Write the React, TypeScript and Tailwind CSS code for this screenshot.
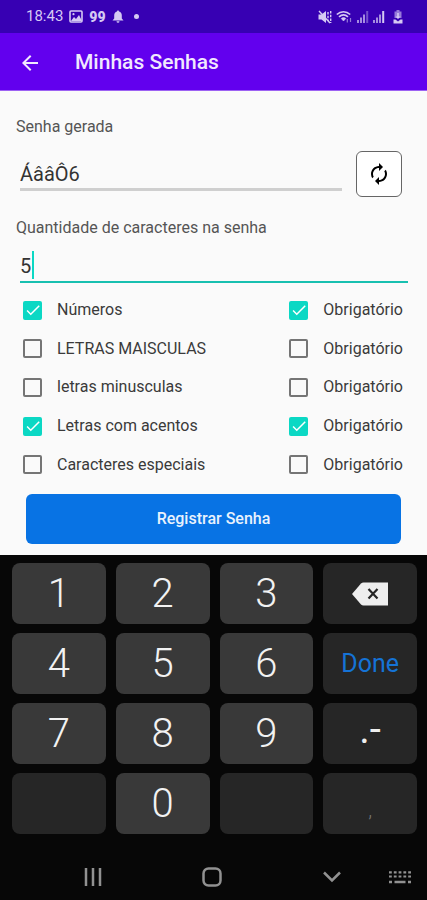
import { useState } from "react";
import { MdArrowBack, MdAutorenew, MdCheck } from "react-icons/md";

const options = [
  { id: "numeros", label: "Números", on: true },
  { id: "maiusculas", label: "LETRAS MAISCULAS", on: false },
  { id: "minusculas", label: "letras minusculas", on: false },
  { id: "acentos", label: "Letras com acentos", on: true },
  { id: "especiais", label: "Caracteres especiais", on: false },
];

function StatusBar() {
  return (
    <div className="flex h-[33px] items-center justify-between bg-[#3700b3] pr-6 pl-[26px] text-[#d5c9f3]">
      <div className="flex items-center gap-[6px]">
        <span className="text-[15px]">18:43</span>
        <svg width="14" height="13" viewBox="0 0 14 13">
          <rect x="1" y="1" width="12" height="11" rx="1" fill="none" stroke="currentColor" strokeWidth="1.6" />
          <path d="M2 11 5 7l2 2 3-4 3 6z" fill="currentColor" />
          <circle cx="4.5" cy="4.2" r="1.1" fill="currentColor" />
        </svg>
        <span className="text-sm font-black">99</span>
        <svg width="12" height="13" viewBox="0 0 12 13" fill="currentColor">
          <path d="M6 .5c.7 0 1 .5 1 1 1.900.5 2.800 2 2.800 4V8.500L11.500 10.500H.5L2.200 8.500V5.500c0-2 .9-3.500 2.800-4 0-.5.3-1 1-1z" />
          <path d="M4.500 11.300h3a1.500 1.500 0 0 1-3 0z" />
        </svg>
        <span className="ml-1 size-[5px] rounded-full bg-[#d5c9f3]" />
      </div>
      <div className="flex items-center gap-1">
        <svg width="14" height="14" viewBox="0 0 14 14" fill="currentColor">
          <path d="M.5 4.500h3L8 1v12L3.500 9.500h-3z" />
          <path d="M1 1l11 12" stroke="currentColor" strokeWidth="1.400" />
          <path d="M10 2v9M12.700 1v12" stroke="currentColor" strokeWidth="1.400" strokeDasharray="2.500 1.200" />
        </svg>
        <svg width="17" height="14" viewBox="0 0 17 14" fill="none" stroke="currentColor">
          <path d="M.8 4.500c4-3.700 9.400-3.700 13.400 0" strokeWidth="1.700" />
          <path d="M3 6.800c2.800-2.500 6.200-2.500 9 0" strokeWidth="1.600" />
          <path d="M5.200 8.500c1.500-1.200 3.100-1.200 4.600 0L7.500 11z" fill="currentColor" strokeWidth=".6" />
          <path d="M11.300 9v3.500M14.500 8v4" strokeWidth="1.200" opacity=".6" />
        </svg>
        <SignalIcon last={0.4} />
        <SignalIcon last={1} />
        <svg className="ml-1" width="10" height="14" viewBox="0 0 10 14" fill="currentColor">
          <path d="M3.500 0h3v1.500H8.500V8H1.500V1.500h2z" opacity=".6" />
          <path d="M4.200 3h1.600v3.500H7.500L5 9 2.500 6.500h1.700z" />
          <path d="M.5 9.500h2L5 11.500l2.500-2h2V13.500H.5z" />
        </svg>
      </div>
    </div>
  );
}

function SignalIcon({ last }: { last: number }) {
  return (
    <svg width="12" height="13" viewBox="0 0 12 13" fill="currentColor">
      <rect x="0" y="10" width="2" height="3" opacity=".7" />
      <rect x="3" y="7.500" width="2" height="5.500" opacity=".7" />
      <rect x="6" y="4.500" width="2" height="8.500" opacity=".7" />
      <rect x="9.200" y="1" width="2" height="12" opacity={last} />
    </svg>
  );
}

function Checkbox({ id, label, on }: { id: string; label: string; on: boolean }) {
  return (
    <label htmlFor={id} className="flex items-center gap-[15px] text-base text-[#3a3a3a]">
      <span className="grid place-items-center">
        <input
          id={id}
          type="checkbox"
          defaultChecked={on}
          className="peer col-start-1 row-start-1 size-[19px] appearance-none rounded-[2px] border-2 border-[#757575] checked:border-[#0bd8c4] checked:bg-[#0bd8c4]"
        />
        <MdCheck className="pointer-events-none invisible col-start-1 row-start-1 size-[18px] text-white peer-checked:visible" />
      </span>
      {label}
    </label>
  );
}

function PasswordForm() {
  const [length, setLength] = useState("5");

  return (
    <main className="bg-[#fafafa] pb-[11px] text-[#555]">
      <div className="flex flex-col px-4 pt-6">
        <label htmlFor="senha" className="text-base">
          Senha gerada
        </label>
        <div className="mt-3 flex items-center gap-[14px] pr-[9px] pl-1">
          <input
            id="senha"
            readOnly
            defaultValue="ÁââÔ6"
            className="h-[34px] min-w-0 flex-1 border-b-[3px] border-[#cfcfcf] bg-transparent pt-[3px] text-xl text-[#333] outline-none"
          />
          <button
            aria-label="Gerar senha"
            className="flex size-[46px] items-center justify-center rounded-md border border-[#666] bg-white text-black"
          >
            <MdAutorenew className="size-6" />
          </button>
        </div>
        <label htmlFor="quantidade" className="mt-[19px] text-base">
          Quantidade de caracteres na senha
        </label>
        <div className="relative mt-[7px] mr-[3px] ml-1 border-b-2 border-[#18c0b0]">
          <input
            id="quantidade"
            inputMode="numeric"
            value={length}
            onChange={(e) => setLength(e.target.value)}
            className="block h-[34px] w-full bg-transparent pt-[3px] text-xl text-[#333] caret-transparent outline-none"
          />
          <span className="absolute top-1 left-3 h-[28px] w-[2px] bg-[#0bd8c4]" />
        </div>
      </div>

      <div className="mt-2 grid h-[193px] grid-rows-5 pr-6 pl-[23px]">
        {options.map((option) => (
          <div key={option.id} className="flex items-center justify-between">
            <Checkbox id={option.id} label={option.label} on={option.on} />
            <Checkbox id={`${option.id}-obrigatorio`} label="Obrigatório" on={option.on} />
          </div>
        ))}
      </div>

      <div className="mt-[10px] px-[26px]">
        <button className="h-[50px] w-full rounded-md bg-[#0873e4] text-base font-medium text-[#e8f2fd]">
          Registrar Senha
        </button>
      </div>
    </main>
  );
}

const digitKey = "h-[61px] rounded-lg bg-[#393939] text-[40px] leading-none font-light text-[#f2f2f2]";
const actionKey = "flex h-[61px] items-center justify-center rounded-lg bg-[#262626]";

function Keyboard() {
  return (
    <section className="grid grid-cols-4 gap-x-[10px] gap-y-[9px] pt-2 pr-[10px] pl-[12px]">
      <button className={digitKey}>1</button>
      <button className={digitKey}>2</button>
      <button className={digitKey}>3</button>
      <button aria-label="Apagar" className={actionKey}>
        <svg width="36" height="24" viewBox="0 0 36 24">
          <path d="M0 12 9 1.500Q10 .5 11.500.5H36v23H11.500q-1.500 0-2.500-1z" fill="#eee" />
          <path d="m16.500 7 9 9.500m0-9.500-9 9.500" stroke="#262626" strokeWidth="2.200" />
        </svg>
      </button>
      <button className={digitKey}>4</button>
      <button className={digitKey}>5</button>
      <button className={digitKey}>6</button>
      <button className={`${actionKey} text-[25px] text-[#1573d6]`}>Done</button>
      <button className={digitKey}>7</button>
      <button className={digitKey}>8</button>
      <button className={digitKey}>9</button>
      <button className={`${actionKey} pb-2 text-[40px] leading-none text-[#eee]`}>.-</button>
      <button aria-label="Vazio" className={actionKey} />
      <button className={digitKey}>0</button>
      <button aria-label="Vazio" className={actionKey} />
      <button className={`${actionKey} pt-3 text-xl font-light text-[#777]`}>,</button>
    </section>
  );
}

function NavigationBar() {
  return (
    <nav className="grid h-[66px] grid-cols-[186px_1fr_auto_auto] items-center pt-5 pr-4 text-[#919191]">
      <button aria-label="Recentes" className="justify-self-center">
        <svg width="18" height="18" viewBox="0 0 18 18" stroke="currentColor" strokeWidth="2.500">
          <path d="M2 0v18M9 0v18M16 0v18" />
        </svg>
      </button>
      <button aria-label="Início" className="ml-4 justify-self-start">
        <svg width="20" height="20" viewBox="0 0 20 20" fill="none" stroke="currentColor" strokeWidth="2.500">
          <rect x="1.500" y="1.500" width="17" height="17" rx="5" />
        </svg>
      </button>
      <button aria-label="Ocultar teclado">
        <svg width="18" height="12" viewBox="0 0 18 12" fill="none" stroke="currentColor" strokeWidth="2.500">
          <path d="m1 1.500 8 8 8-8" />
        </svg>
      </button>
      <button aria-label="Trocar teclado" className="ml-12">
        <svg width="22" height="13" viewBox="0 0 22 13" stroke="currentColor">
          <path d="M0 1.300h22M0 5.500h22" strokeWidth="2.200" strokeDasharray="2.800 2" />
          <path d="M0 11h3M5.500 11h11M19 11h3" strokeWidth="2.600" />
        </svg>
      </button>
    </nav>
  );
}

export default function App() {
  return (
    <div className="min-h-screen bg-[#070707] font-[Roboto,sans-serif]">
      <StatusBar />
      <header className="flex h-[58px] items-center gap-[33px] border-b border-[#9d62f3] bg-[#6200ee] pt-[2px] pl-[18px] text-[#f1e8fe]">
        <button aria-label="Voltar">
          <MdArrowBack className="size-6" />
        </button>
        <h1 className="text-[21px] font-medium">Minhas Senhas</h1>
      </header>
      <PasswordForm />
      <Keyboard />
      <NavigationBar />
    </div>
  );
}
